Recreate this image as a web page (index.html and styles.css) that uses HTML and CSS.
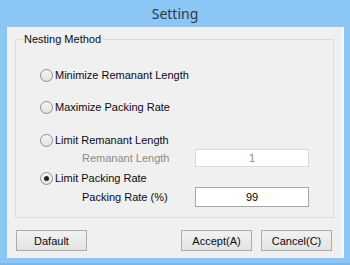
FILE: index.html
```html
<!DOCTYPE html>
<html lang="en">
<head>
    <meta charset="UTF-8">
    <title>Setting</title>
    <link rel="stylesheet" href="styles.css">
</head>
<body>
    <div class="window">
        <div class="title">Setting</div>
        <div class="client">
            <div class="group">
                <span class="legend">Nesting Method</span>
                <div class="opt opt-1"><span class="radio"></span>Minimize Remanant Length</div>
                <div class="opt opt-2"><span class="radio"></span>Maximize Packing Rate</div>
                <div class="opt opt-3"><span class="radio"></span>Limit Remanant Length</div>
                <div class="sub">
                    <span class="sub-lbl disabled">Remanant Length</span>
                    <span class="field disabled">1</span>
                </div>
                <div class="opt opt-4"><span class="radio checked"></span>Limit Packing Rate</div>
                <div class="sub sub-2">
                    <span class="sub-lbl">Packing Rate (%)</span>
                    <span class="field">99</span>
                </div>
            </div>
            <div class="btn-row">
                <button class="btn">Dafault</button>
                <span class="spacer"></span>
                <button class="btn">Accept(A)</button>
                <button class="btn">Cancel(C)</button>
            </div>
        </div>
    </div>
</body>
</html>
```

FILE: styles.css
```css
*, *:before, *:after {
    margin: 0;
    padding: 0;
    box-sizing: border-box;
}
body {
    background: #8cc6f7;
    font-family: 'Liberation Sans', Arial, sans-serif;
    font-size: 11px;
    color: #0a0a14;
}
.window {
    width: 350px;
    height: 265px;
    background: #8cc6f7;
    box-shadow: inset 0 -2px 0 #7fb4e4;
}
.title {
    height: 27px;
    line-height: 28px;
    text-align: center;
    font-family: 'Noto Sans', sans-serif;
    font-size: 14px;
    color: #2e3a48;
}
.client {
    width: 337px;
    height: 231px;
    margin-left: 7px;
    padding: 12px 8px 0 8px;
    background: #f0f0f0;
    border-right: 2px solid #f7f7f7;
}
.group {
    position: relative;
    height: 179px;
    border: 1px solid #dcdcdc;
    padding-top: 26px;
}
.legend {
    position: absolute;
    top: -8px;
    left: 7px;
    padding: 0 1px;
    line-height: 14px;
    background: #f0f0f0;
}
.opt {
    display: flex;
    align-items: center;
    height: 18px;
    padding-left: 24px;
}
.opt-2 {
    margin-top: 14px;
}
.opt-3 {
    margin-top: 15px;
}
.opt-4 {
    margin-top: 2px;
}
.radio {
    width: 13px;
    height: 13px;
    margin-right: 2px;
    border: 1px solid #8f8f8f;
    border-radius: 50%;
    background: linear-gradient(#f4f4f4, #e2e2e2);
    display: flex;
    align-items: center;
    justify-content: center;
}
.radio.checked:after {
    content: '';
    width: 5px;
    height: 5px;
    border-radius: 50%;
    background: #222;
}
.sub {
    display: flex;
    align-items: center;
    height: 18px;
    padding-left: 66px;
}
.sub-2 {
    height: 20px;
}
.sub-lbl {
    width: 113px;
}
.disabled {
    color: #8a8a8a;
}
.field {
    width: 114px;
    height: 18px;
    line-height: 16px;
    text-align: center;
    background: #fff;
    border: 1px solid #d9d9d9;
}
.sub-2 .field {
    height: 20px;
    line-height: 18px;
    border-color: #a9a9a9;
    color: #000;
}
.btn-row {
    display: flex;
    gap: 9px;
    margin-top: 12px;
    padding: 0 2px 0 1px;
}
.spacer {
    flex: 1;
}
.btn {
    width: 71px;
    height: 21px;
    font-family: 'Liberation Sans', Arial, sans-serif;
    font-size: 11px;
    color: #0a0a14;
    border: 1px solid #acacac;
    background: linear-gradient(#f2f2f2, #e3e3e3);
}
```
